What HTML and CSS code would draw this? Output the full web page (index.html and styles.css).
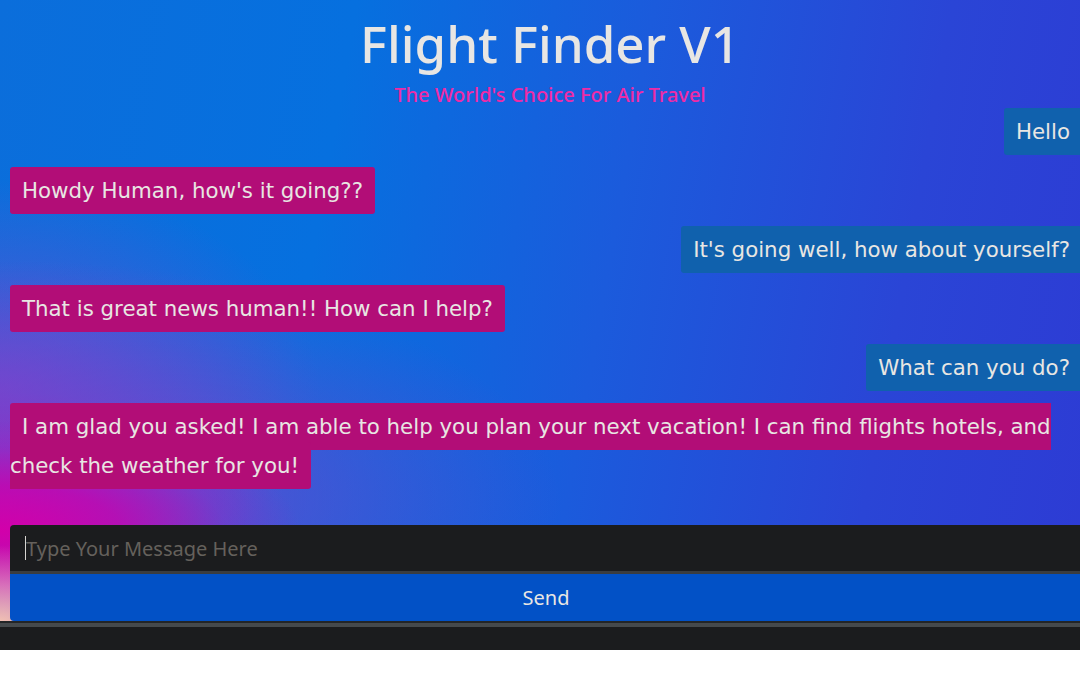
FILE: index.html
```html
<!DOCTYPE html>
<html lang="en">
<head>
<meta charset="utf-8">
<title>Flight Finder V1</title>
<link rel="stylesheet" href="styles.css">
</head>
<body>
<div class="app">
  <header class="header">
    <h1 class="title">Flight Finder V1</h1>
    <p class="subtitle">The World's Choice For Air Travel</p>
  </header>
  <main class="chat">
    <div class="msg user"><span class="bubble">Hello</span></div>
    <div class="msg bot"><span class="bubble">Howdy Human, how's it going??</span></div>
    <div class="msg user"><span class="bubble">It's going well, how about yourself?</span></div>
    <div class="msg bot"><span class="bubble">That is great news human!! How can I help?</span></div>
    <div class="msg user"><span class="bubble">What can you do?</span></div>
    <div class="msg bot"><span class="bubble"> I am glad you asked! I am able to help you plan your next vacation! I can find flights hotels, and check the weather for you! </span></div>
  </main>
  <form class="composer">
    <div class="input-wrap">
      <input class="input" type="text" placeholder="Type Your Message Here">
      <span class="caret"></span>
    </div>
    <button class="send" type="button">Send</button>
  </form>
</div>
<footer class="bottom-bar"></footer>
</body>
</html>
```
FILE: styles.css
```css
html, body {
  margin: 0;
  padding: 0;
  overflow: hidden;
  background: #ffffff;
}

.app {
  width: 1082px;
  box-sizing: border-box;
  padding: 0 0 0 10px;
  height: 621px;
  display: flex;
  flex-direction: column;
  background:
    radial-gradient(ellipse 110px 80px at 0px 625px, rgba(255, 205, 175, 0.95), rgba(255, 165, 185, 0.6) 50%, rgba(255, 150, 180, 0) 100%),
    radial-gradient(ellipse 300px 110px at 0px 530px, rgba(210, 0, 170, 1), rgba(195, 5, 175, 0.8) 40%, rgba(160, 30, 195, 0.3) 75%, rgba(140, 60, 200, 0) 100%),
    radial-gradient(ellipse 560px 240px at 0px 500px, rgba(175, 30, 190, 0.85), rgba(140, 55, 200, 0.5) 45%, rgba(120, 70, 205, 0) 100%),
    radial-gradient(ellipse 320px 210px at 0px 390px, rgba(145, 65, 205, 0.6), rgba(130, 70, 205, 0) 100%),
    linear-gradient(100deg, #0b6edb 0%, #0670df 30%, #1b5bdc 55%, #2a45d6 80%, #2d3bd4 100%);
}

.header {
  text-align: center;
  color: #e8e6e3;
  font-family: "Noto Sans", "Open Sans", sans-serif;
  padding-left: 8px;
}

.title {
  margin: 13px 0 0 0;
  font-size: 51px;
  font-weight: 500;
  line-height: 60px;
}

.subtitle {
  margin: 10px 0 0 0;
  font-size: 20px;
  font-weight: 500;
  line-height: 24px;
  color: #ef2ba6;
}

.chat {
  display: flex;
  flex-direction: column;
  gap: 20px;
  margin-top: 4.5px;
  font-family: "DejaVu Sans", sans-serif;
  font-size: 21.33px;
  color: #e8e6e3;
}

.msg {
  line-height: 39px;
}

.msg.user {
  text-align: right;
}

.msg.bot {
  text-align: left;
}

.bubble {
  padding: 11px 12px;
  border-radius: 3px;
}

.user .bubble {
  background: #1061ad;
}

.bot .bubble {
  background: #b20d77;
}

.composer {
  display: flex;
  flex-direction: column;
  margin: auto 0 0 0;
}

.input-wrap {
  position: relative;
  display: flex;
}

.input {
  flex: 1;
  height: 49px;
  box-sizing: border-box;
  border: none;
  border-bottom: 3px solid #3a3d40;
  border-radius: 4px 0 0 0;
  background: #1b1c1e;
  color: #e8e6e3;
  padding: 0 0 0 16px;
  font-family: "Noto Sans", "Open Sans", sans-serif;
  font-size: 20px;
  outline: none;
  margin: 0;
}

.input::placeholder {
  color: #65615c;
}

.caret {
  position: absolute;
  left: 15px;
  top: 11px;
  width: 1px;
  height: 24px;
  background: #d6d4d0;
}

.send {
  height: 47px;
  border: none;
  border-radius: 0 0 0 4px;
  background: #0251c6;
  color: #e8e6e3;
  font-family: "Noto Sans", "Open Sans", sans-serif;
  font-size: 20px;
  padding: 0;
  margin: 0;
}

.bottom-bar {
  height: 29px;
  box-sizing: border-box;
  background: #1b1c1e;
  border-top: 2px solid #232527;
  box-shadow: inset 0 4px 0 #45494c;
}
```
